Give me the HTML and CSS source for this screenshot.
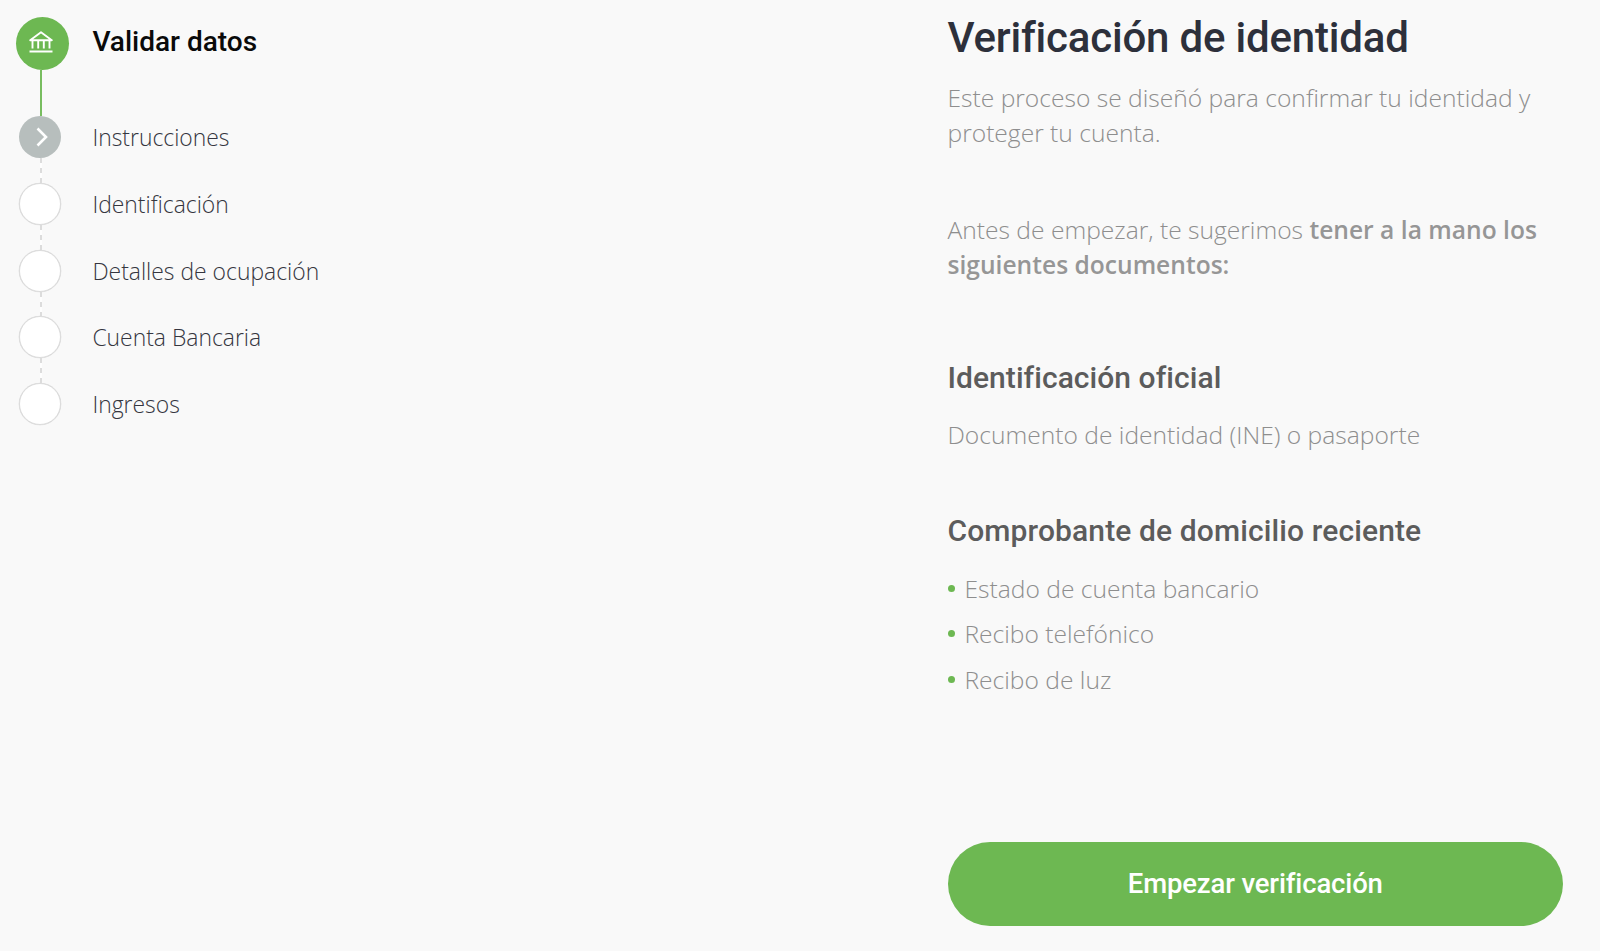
FILE: index.html
```html
<!DOCTYPE html>
<html lang="es">
<head>
<meta charset="utf-8">
<title>Verificación de identidad</title>
<link rel="stylesheet" href="styles.css">
</head>
<body>
<div class="page">
  <nav class="steps">
    <div class="step step-main">
      <div class="track">
        <span class="dot dot-main">
          <svg class="bank" viewBox="0 0 24 22" fill="none" stroke="#fff" stroke-width="1.9">
            <path d="M1.2 9.2 12 1.3l10.800 7.900z" stroke-linejoin="round"/>
            <path d="M3.500 9.500v8M9.200 9.500v8M14.800 9.500v8M20.500 9.500v8"/>
            <path d="M.5 20.500h23" stroke-width="2"/>
          </svg>
        </span>
        <span class="line line-solid"></span>
      </div>
      <span class="label label-main">Validar datos</span>
    </div>
    <div class="step">
      <div class="track">
        <span class="dot dot-current">
          <svg class="chevron" viewBox="0 0 12 20" fill="none" stroke="#fff" stroke-width="2.600"><path d="m1.500 1.500 8.500 8.500-8.500 8.500"/></svg>
        </span>
        <span class="line line-dashed"></span>
      </div>
      <span class="label">Instrucciones</span>
    </div>
    <div class="step">
      <div class="track"><span class="dot"></span><span class="line line-dashed"></span></div>
      <span class="label">Identificación</span>
    </div>
    <div class="step">
      <div class="track"><span class="dot"></span><span class="line line-dashed"></span></div>
      <span class="label">Detalles de ocupación</span>
    </div>
    <div class="step">
      <div class="track"><span class="dot"></span><span class="line line-dashed"></span></div>
      <span class="label">Cuenta Bancaria</span>
    </div>
    <div class="step">
      <div class="track"><span class="dot"></span></div>
      <span class="label">Ingresos</span>
    </div>
  </nav>
  <main class="content">
    <h1 class="title">Verificación de identidad</h1>
    <p class="text intro">Este proceso se diseñó para confirmar tu identidad y proteger tu cuenta.</p>
    <p class="text notice">Antes de empezar, te sugerimos <strong class="strong">tener a la mano los</strong> <strong class="strong">siguientes documentos:</strong></p>
    <h2 class="subtitle">Identificación oficial</h2>
    <p class="text document">Documento de identidad (INE) o pasaporte</p>
    <h2 class="subtitle subtitle-address">Comprobante de domicilio reciente</h2>
    <ul class="list">
      <li class="text item">Estado de cuenta bancario</li>
      <li class="text item">Recibo telefónico</li>
      <li class="text item">Recibo de luz</li>
    </ul>
    <button class="button" type="button">Empezar verificación</button>
  </main>
</div>
</body>
</html>
```
FILE: styles.css
```css
* { box-sizing: border-box; }
body {
  margin: 0;
  background: #f9f9f9;
  font-family: "Open Sans", "Noto Sans", sans-serif;
}
h1, h2, p, ul { margin: 0; padding: 0; }
.page {
  display: flex;
  justify-content: space-between;
  height: 951px;
  padding: 0 37px 0 16px;
  overflow: hidden;
}
.steps { padding-top: 17.300px; }
.step { display: flex; height: 66.800px; }
.step-main { height: 98.700px; }
.track {
  display: flex;
  flex-direction: column;
  align-items: center;
  flex: none;
  width: 50px;
  margin-right: 26.400px;
}
.dot {
  display: flex;
  align-items: center;
  justify-content: center;
  flex: none;
  width: 42px;
  height: 42px;
  margin-right: 1.500px;
  border: 1.500px solid #dcdcdc;
  border-radius: 50%;
  background: #fff;
  box-shadow: 0 0 0 .3px #dcdcdc;
}
.dot-main {
  width: 53px;
  height: 53px;
  margin-right: -3px;
  border: 0;
  background: #6db852;
  box-shadow: none;
}
.dot-current { border: 0; background: #b7bebd; box-shadow: none; }
.bank { width: 24px; height: 22px; margin: 0 3px 4px 0; }
.chevron { width: 12px; height: 20px; margin-left: 4px; }
.line { flex: 1; width: 2px; }
.line-solid { background: #78bd60; }
.line-dashed {
  background: repeating-linear-gradient(#dcdcdc 0 5px, #fefefe 5px 10px);
}
.label {
  color: #35363f;
  font-size: 22.900px;
  font-weight: 300;
  line-height: 43px;
  white-space: nowrap;
}
.label-main {
  color: #0a0a0a;
  font-family: Roboto, sans-serif;
  font-size: 28px;
  font-weight: 500;
  line-height: 49px;
}
.content { width: 615.500px; }
.title {
  padding-top: 10px;
  color: #2d303b;
  font: 500 42px/56px Roboto, sans-serif;
  letter-spacing: -.2px;
  white-space: nowrap;
}
.text {
  color: #8e8e8e;
  font-size: 24.600px;
  font-weight: 300;
  line-height: 35.200px;
}
.intro { margin-top: 14px; }
.notice { margin-top: 61.500px; }
.strong { color: #969696; font-weight: 600; }
.subtitle {
  margin-top: 75.500px;
  color: #5c5c5c;
  font: 500 30px/40px Roboto, sans-serif;
  letter-spacing: .05px;
  white-space: nowrap;
}
.document { margin-top: 19.500px; }
.subtitle-address { margin-top: 58.500px; letter-spacing: .12px; }
.list {
  display: grid;
  gap: 10.500px;
  margin-top: 19.500px;
  list-style: none;
}
.item { display: flex; align-items: center; gap: 10px; }
.item::before {
  content: "";
  width: 7px;
  height: 7px;
  border-radius: 50%;
  background: #6db852;
}
.button {
  display: block;
  width: 100%;
  height: 84px;
  margin-top: 144.500px;
  padding: 0;
  border: 0;
  border-radius: 42px;
  background: #6db852;
  color: #fff;
  font: 500 27.500px/84px Roboto, sans-serif;
  letter-spacing: -.15px;
}
```
